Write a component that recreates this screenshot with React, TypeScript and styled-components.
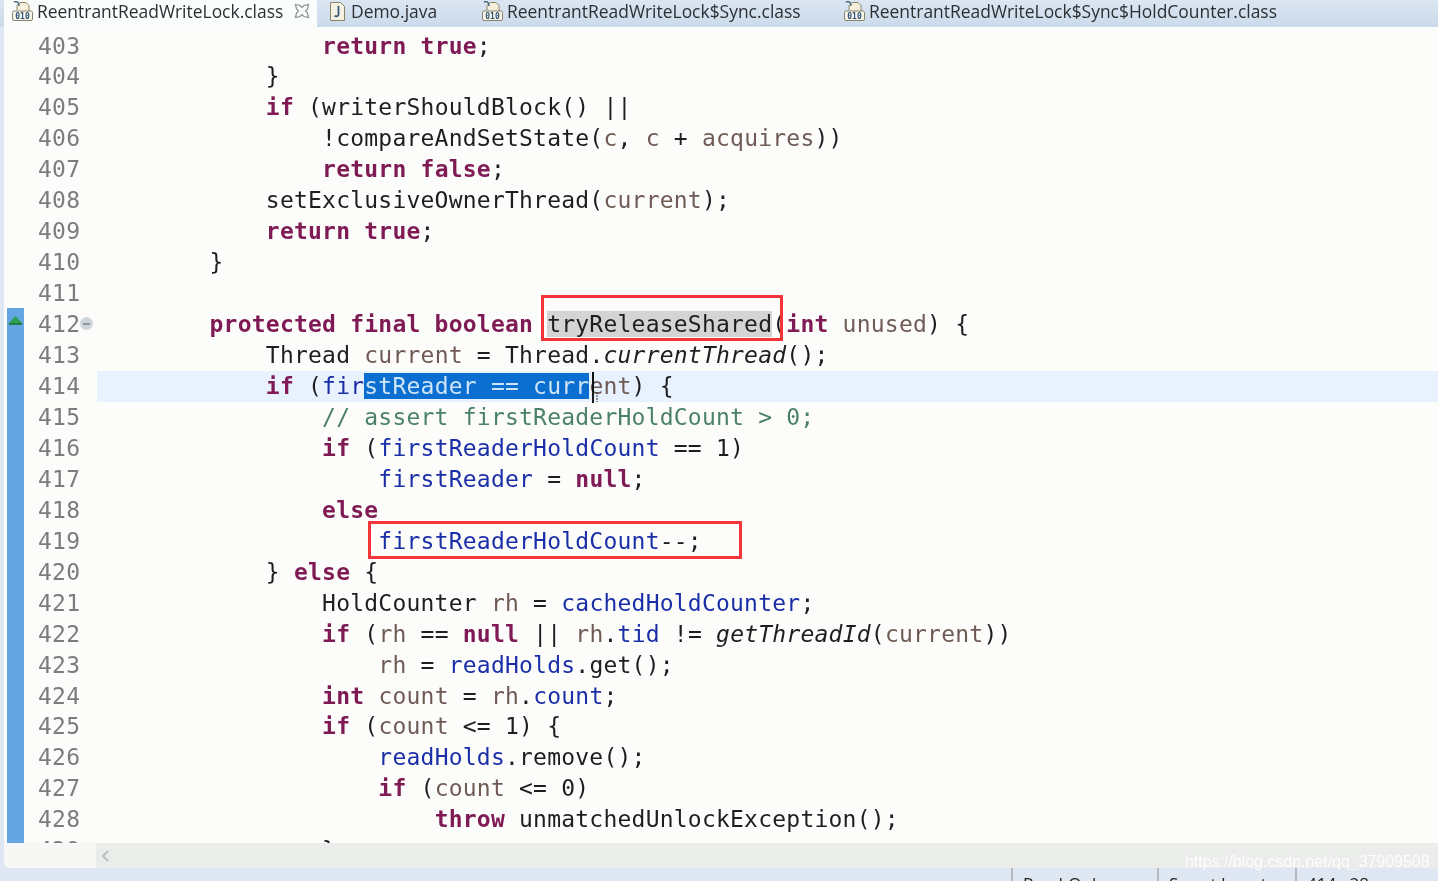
import styled, { createGlobalStyle } from 'styled-components';

const GlobalStyle = createGlobalStyle`
  html,
  body {
    margin: 0;
    height: 100%;
    overflow: hidden;
    background: #dfe7f3;
  }
`;

const Window = styled.div`
  width: 1438px;
  height: 881px;
  display: flex;
  flex-direction: column;
  overflow: hidden;
  background: #dfe7f3;
  filter: blur(0.45px);
`;

const TabBar = styled.div`
  height: 27px;
  flex: none;
  display: flex;
  align-items: center;
  padding-left: 4px;
  background: linear-gradient(#dbe6f2, #cbdaea);
  font-family: 'Open Sans', 'Noto Sans', sans-serif;
  font-size: 17.45px;
  color: #2c2f33;
`;

const Tab = styled.div<{ $active?: boolean; $width: number; $pad?: number }>`
  width: ${(p) => p.$width}px;
  height: 100%;
  flex: none;
  display: flex;
  align-items: center;
  gap: 3px;
  box-sizing: border-box;
  padding-left: ${(p) => p.$pad ?? 9}px;
  padding-bottom: 5px;
  white-space: nowrap;
  background: ${(p) => (p.$active ? '#fbfcfc' : 'transparent')};
`;

const CloseMark = styled.svg`
  margin-left: 8px;
  flex: none;
`;

const Panel = styled.div`
  flex: 1;
  min-height: 0;
  display: flex;
  flex-direction: column;
  margin-left: 4px;
  margin-bottom: 13px;
  border-bottom-left-radius: 6px;
  overflow: hidden;
  background: #fcfdfb;
`;

const Editor = styled.div`
  flex: 1;
  min-height: 0;
  display: flex;
  overflow: hidden;
`;

const Ruler = styled.div`
  width: 17px;
  flex: none;
  margin-left: 3px;
  display: flex;
  flex-direction: column;
`;

const RulerFill = styled.div`
  flex: 1;
  margin-top: 281px;
  position: relative;
  background: #64a5e3;
`;

const Marker = styled.svg`
  position: absolute;
  top: 8px;
  left: 1px;
`;

const CodeArea = styled.div`
  flex: 1;
  min-width: 0;
  position: relative;
  padding-top: 3.5px;
  font-family: 'DejaVu Sans Mono', 'Liberation Mono', monospace;
  font-size: 23px;
  letter-spacing: 0.22px;
`;

const Row = styled.div`
  height: 30.96px;
  line-height: 30.96px;
  display: flex;
  white-space: pre;
`;

const LineNo = styled.div`
  width: 73px;
  flex: none;
  box-sizing: border-box;
  padding-left: 14px;
  position: relative;
  color: #7b7d7d;
`;

const FoldMark = styled.span`
  position: absolute;
  left: 56px;
  top: 8px;
  width: 13px;
  height: 13px;
  border-radius: 50%;
  background: #cfd6dc;

  &::after {
    content: '';
    position: absolute;
    left: 3px;
    right: 3px;
    top: 5.5px;
    height: 2px;
    background: #8e979f;
  }
`;

const CodeLine = styled.div<{ $current?: boolean }>`
  flex: 1;
  min-width: 0;
  color: #1c1e1f;
  background: ${(p) => (p.$current ? '#e8f2fe' : 'transparent')};
`;

const tokenColors: Record<string, string> = {
  k: '#7f1a55',
  f: '#1a2ea8',
  v: '#6f5a55',
  c: '#4b8069',
};

const Tok = styled.span<{ $kind: string }>`
  color: ${(p) => tokenColors[p.$kind] ?? 'inherit'};
  font-weight: ${(p) => (p.$kind === 'k' ? 700 : 400)};
  font-style: ${(p) => (p.$kind === 'i' ? 'italic' : 'normal')};
`;

const Selected = styled.span`
  background: #0a6fd0;
  color: #cfe4f7;
`;

const Occurrence = styled.span`
  background: #d4d4d4;
`;

const RedBox = styled.div<{ $left: number; $top: number; $w: number; $h: number }>`
  position: absolute;
  left: ${(p) => p.$left}px;
  top: ${(p) => p.$top}px;
  width: ${(p) => p.$w}px;
  height: ${(p) => p.$h}px;
  box-sizing: border-box;
  border: 3px solid #f5333a;
`;

const MouseCursor = styled.svg`
  position: absolute;
  left: 566px;
  top: 345px;
`;

const ScrollBar = styled.div`
  height: 25px;
  flex: none;
  display: flex;
  align-items: center;
  padding-left: 96px;
  background: linear-gradient(90deg, #f7f8f6 0, #f7f8f6 92px, #ebedeb 92px);
`;

const StatusBar = styled.div`
  position: absolute;
  top: 868px;
  left: 0;
  right: 0;
  height: 13px;
  display: flex;
  padding-left: 1011px;
  font-family: 'Open Sans', sans-serif;
  font-size: 17px;
  color: #222;
  overflow: hidden;
`;

const StatusCell = styled.div<{ $width: number }>`
  width: ${(p) => p.$width}px;
  flex: none;
  box-sizing: border-box;
  padding: 6px 0 0 10px;
  line-height: 20px;
  border-left: 2px solid #b5bac2;
  white-space: nowrap;
`;

const Watermark = styled.div`
  position: absolute;
  left: 1185px;
  top: 850px;
  font-family: 'Liberation Sans', sans-serif;
  font-size: 15.95px;
  line-height: 24px;
  color: rgba(255, 255, 255, 0.85);
`;

type Piece = [string, string];

const p = (kind: string, text: string): Piece => [kind, text];

const lines: Piece[][] = [
  [p('', '\t\t\t'), p('k', 'return true'), p('', ';')],
  [p('', '\t\t}')],
  [p('', '\t\t'), p('k', 'if'), p('', ' (writerShouldBlock() ||')],
  [p('', '\t\t\t!compareAndSetState('), p('v', 'c'), p('', ', '), p('v', 'c'), p('', ' + '), p('v', 'acquires'), p('', '))')],
  [p('', '\t\t\t'), p('k', 'return false'), p('', ';')],
  [p('', '\t\tsetExclusiveOwnerThread('), p('v', 'current'), p('', ');')],
  [p('', '\t\t'), p('k', 'return true'), p('', ';')],
  [p('', '\t}')],
  [],
  [],
  [p('', '\t\tThread '), p('v', 'current'), p('', ' = Thread.'), p('i', 'currentThread'), p('', '();')],
  [],
  [p('c', '\t\t\t// assert firstReaderHoldCount > 0;')],
  [p('', '\t\t\t'), p('k', 'if'), p('', ' ('), p('f', 'firstReaderHoldCount'), p('', ' == 1)')],
  [p('', '\t\t\t\t'), p('f', 'firstReader'), p('', ' = '), p('k', 'null'), p('', ';')],
  [p('', '\t\t\t'), p('k', 'else')],
  [p('', '\t\t\t\t'), p('f', 'firstReaderHoldCount'), p('', '--;')],
  [p('', '\t\t} '), p('k', 'else'), p('', ' {')],
  [p('', '\t\t\tHoldCounter '), p('v', 'rh'), p('', ' = '), p('f', 'cachedHoldCounter'), p('', ';')],
  [p('', '\t\t\t'), p('k', 'if'), p('', ' ('), p('v', 'rh'), p('', ' == '), p('k', 'null'), p('', ' || '), p('v', 'rh'), p('', '.'), p('f', 'tid'), p('', ' != '), p('i', 'getThreadId'), p('', '('), p('v', 'current'), p('', '))')],
  [p('', '\t\t\t\t'), p('v', 'rh'), p('', ' = '), p('f', 'readHolds'), p('', '.get();')],
  [p('', '\t\t\t'), p('k', 'int'), p('', ' '), p('v', 'count'), p('', ' = '), p('v', 'rh'), p('', '.'), p('f', 'count'), p('', ';')],
  [p('', '\t\t\t'), p('k', 'if'), p('', ' ('), p('v', 'count'), p('', ' <= 1) {')],
  [p('', '\t\t\t\t'), p('f', 'readHolds'), p('', '.remove();')],
  [p('', '\t\t\t\t'), p('k', 'if'), p('', ' ('), p('v', 'count'), p('', ' <= 0)')],
  [p('', '\t\t\t\t\t'), p('k', 'throw'), p('', ' unmatchedUnlockException();')],
  [p('', '\t\t\t}')],
];

// the method body sits one tab in from the column the data starts at
const Pieces = ({ items }: { items: Piece[] }) => (
  <>
    {items.length > 0 && <Tok $kind="">{'    '}</Tok>}
    {items.map(([kind, text], i) => (
      <Tok key={i} $kind={kind}>
        {text.replace(/\t/g, '    ')}
      </Tok>
    ))}
  </>
);

const ClassIcon = () => (
  <svg width="23" height="23" viewBox="0 0 23 23" style={{ flex: 'none' }}>
    <path d="M6 10V5.500L9 2.500h6l3 3V11" fill="#f6efdc" stroke="#8d8466" strokeWidth="1" />
    <path d="M3 2c3-1 5 0 5 4" fill="none" stroke="#3d5f7a" strokeWidth="1.400" />
    <rect x="1.500" y="11" width="20" height="9.500" rx="1.500" fill="#f7f4e8" stroke="#88836c" />
    <text x="11.500" y="18.600" textAnchor="middle" fontFamily="DejaVu Sans Mono" fontSize="8" fontWeight="700" fill="#2b4f73">
      010
    </text>
  </svg>
);

const JavaIcon = () => (
  <svg width="20" height="21" viewBox="0 0 20 21" style={{ flex: 'none' }}>
    <path d="M2.500 1.500h10l4 4v14h-14z" fill="#f5f1e2" stroke="#8b8568" />
    <path d="M10.500 5v8.500c0 2-2.500 2.200-4 1.200" fill="none" stroke="#365a7c" strokeWidth="1.800" />
  </svg>
);

export default function App() {
  return (
    <Window>
      <GlobalStyle />
      <TabBar>
        <Tab $active $width={313} $pad={7}>
          <ClassIcon />
          ReentrantReadWriteLock.class
          <CloseMark width="16" height="16" viewBox="0 0 16 16">
            <path d="M1.500 1.500l4.500 1 2 2 2-2 4.500-1-1 4.500-2 2 2 2 1 4.500-4.500-1-2-2-2 2-4.500 1 1-4.500 2-2-2-2z" fill="none" stroke="#8a8f94" strokeWidth="1.200" />
          </CloseMark>
        </Tab>
        <Tab $width={155} $pad={11}>
          <JavaIcon />
          Demo.java
        </Tab>
        <Tab $width={362}>
          <ClassIcon />
          ReentrantReadWriteLock$Sync.class
        </Tab>
        <Tab $width={500}>
          <ClassIcon />
          ReentrantReadWriteLock$Sync$HoldCounter.class
        </Tab>
      </TabBar>
      <Panel>
        <Editor>
          <Ruler>
            <RulerFill>
              <Marker width="15" height="10" viewBox="0 0 15 10">
                <path d="M7.500 0L14 7H1z" fill="#2f9e55" />
                <path d="M1 7h13v2H1z" fill="#237c45" />
              </Marker>
            </RulerFill>
          </Ruler>
          <CodeArea>
            {lines.map((items, i) => {
              const no = 403 + i;
              return (
                <Row key={no}>
                  <LineNo>
                    {no}
                    {no === 412 && <FoldMark />}
                  </LineNo>
                  <CodeLine $current={no === 414}>
                    {no === 412 && (
                      <>
                        <Tok $kind="">{'        '}</Tok>
                        <Tok $kind="k">protected final boolean</Tok>
                        <Tok $kind="">{' '}</Tok>
                        <Occurrence>tryReleaseShared</Occurrence>
                        <Tok $kind="">(</Tok>
                        <Tok $kind="k">int</Tok>
                        <Tok $kind="">{' '}</Tok>
                        <Tok $kind="v">unused</Tok>
                        <Tok $kind="">{') {'}</Tok>
                      </>
                    )}
                    {no === 414 && (
                      <>
                        <Tok $kind="">{'            '}</Tok>
                        <Tok $kind="k">if</Tok>
                        <Tok $kind="">{' ('}</Tok>
                        <Tok $kind="f">fir</Tok>
                        <Selected>stReader == curr</Selected>
                        <Tok $kind="v">ent</Tok>
                        <Tok $kind="">{') {'}</Tok>
                      </>
                    )}
                    {no !== 412 && no !== 414 && <Pieces items={items} />}
                  </CodeLine>
                </Row>
              );
            })}
            <MouseCursor width="10" height="32" viewBox="0 0 10 32">
              <path d="M2 0h2v31H2z" fill="#111" />
              <path d="M3 20v10M7 20v10" stroke="#333" strokeWidth="1" strokeDasharray="2 1" fill="none" />
            </MouseCursor>
            <RedBox $left={517} $top={268} $w={242} $h={46} />
            <RedBox $left={344} $top={494} $w={374} $h={38} />
          </CodeArea>
        </Editor>
        <ScrollBar>
          <svg width="10" height="14" viewBox="0 0 10 14">
            <path d="M8 2L3 7l5 5" fill="none" stroke="#b9bcbc" strokeWidth="1.800" />
          </svg>
        </ScrollBar>
      </Panel>
      <StatusBar>
        <StatusCell $width={146}>Read-Only</StatusCell>
        <StatusCell $width={138}>Smart Insert</StatusCell>
        <StatusCell $width={140}>414 : 28</StatusCell>
      </StatusBar>
      <Watermark>https://blog.csdn.net/qq_37909508</Watermark>
    </Window>
  );
}
